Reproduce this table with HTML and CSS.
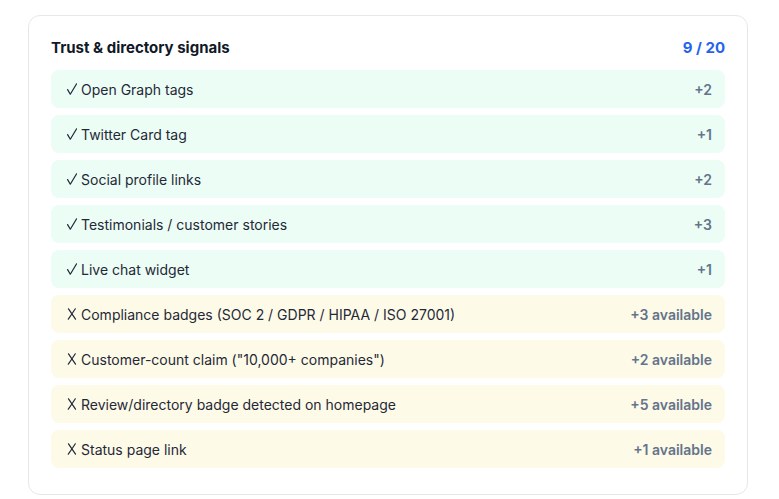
FILE: index.html
```html
<!DOCTYPE html>
<html>
<head>
<meta charset="utf-8">
<link rel="stylesheet" href="styles.css">
</head>
<body>
<div class="wrap">
  <section class="card">
    <header class="head">
      <h2 class="title">Trust &amp; directory signals</h2>
      <span class="score">9 / 20</span>
    </header>
    <ul class="list">
      <li class="row pass"><span class="label"><svg class="mark" viewBox="0 0 10 12"><path d="M0.6 6.6 L3.3 11.2 L9.6 0.8"/></svg>Open Graph tags</span><span class="pts">+2</span></li>
      <li class="row pass"><span class="label"><svg class="mark" viewBox="0 0 10 12"><path d="M0.6 6.6 L3.3 11.2 L9.6 0.8"/></svg>Twitter Card tag</span><span class="pts">+1</span></li>
      <li class="row pass"><span class="label"><svg class="mark" viewBox="0 0 10 12"><path d="M0.6 6.6 L3.3 11.2 L9.6 0.8"/></svg>Social profile links</span><span class="pts">+2</span></li>
      <li class="row pass"><span class="label"><svg class="mark" viewBox="0 0 10 12"><path d="M0.6 6.6 L3.3 11.2 L9.6 0.8"/></svg>Testimonials / customer stories</span><span class="pts">+3</span></li>
      <li class="row pass"><span class="label"><svg class="mark" viewBox="0 0 10 12"><path d="M0.6 6.6 L3.3 11.2 L9.6 0.8"/></svg>Live chat widget</span><span class="pts">+1</span></li>
      <li class="row fail"><span class="label"><svg class="mark" viewBox="0 0 10 12"><path d="M1.5 0.8 Q5 6 8.5 11.2 M8.3 0.8 Q5 6 1.3 11.2"/></svg>Compliance badges (SOC 2 / GDPR / HIPAA / ISO 27001)</span><span class="pts">+3 available</span></li>
      <li class="row fail"><span class="label"><svg class="mark" viewBox="0 0 10 12"><path d="M1.5 0.8 Q5 6 8.5 11.2 M8.3 0.8 Q5 6 1.3 11.2"/></svg>Customer-count claim ("10,000+ companies")</span><span class="pts">+2 available</span></li>
      <li class="row fail"><span class="label"><svg class="mark" viewBox="0 0 10 12"><path d="M1.5 0.8 Q5 6 8.5 11.2 M8.3 0.8 Q5 6 1.3 11.2"/></svg>Review/directory badge detected on homepage</span><span class="pts">+5 available</span></li>
      <li class="row fail"><span class="label"><svg class="mark" viewBox="0 0 10 12"><path d="M1.5 0.8 Q5 6 8.5 11.2 M8.3 0.8 Q5 6 1.3 11.2"/></svg>Status page link</span><span class="pts">+1 available</span></li>
    </ul>
  </section>
</div>
</body>
</html>
```
FILE: styles.css
```css
html, body {
  margin: 0;
  background: #ffffff;
  font-family: Inter, "Noto Sans", "DejaVu Sans", sans-serif;
}
.wrap {
  padding: 15px 0 0 28px;
}
.card {
  width: 720px;
  box-sizing: border-box;
  border: 1px solid #e5e7eb;
  border-radius: 12px;
  padding: 20px 22px 26px;
  background: #fff;
}
.head {
  display: flex;
  justify-content: space-between;
  align-items: center;
  height: 22px;
  margin-bottom: 12px;
}
.title {
  margin: 0;
  font-size: 15px;
  font-weight: 700;
  color: #111827;
}
.score {
  font-size: 15px;
  font-weight: 700;
  color: #2563eb;
}
.list {
  list-style: none;
  margin: 0;
  padding: 0;
  display: flex;
  flex-direction: column;
  gap: 7px;
}
.row {
  display: flex;
  justify-content: space-between;
  align-items: center;
  height: 38px;
  box-sizing: border-box;
  padding: 0 13px 0 16px;
  border-radius: 8px;
  font-size: 14px;
  color: #1f2937;
}
.label {
  display: flex;
  align-items: center;
  gap: 4px;
}
.mark {
  width: 10px;
  height: 12px;
  flex: none;
  fill: none;
  stroke: #1f2937;
  stroke-width: 1.2;
  stroke-linecap: round;
  stroke-linejoin: round;
}
.pass { background: #ecfdf5; }
.fail { background: #fefae8; }
.pts {
  font-weight: 600;
  color: #64748b;
}
```
